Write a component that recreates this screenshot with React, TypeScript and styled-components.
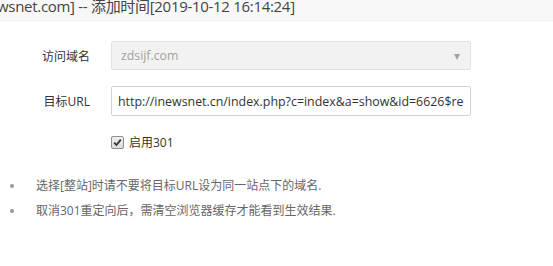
import React from "react"
import styled, { createGlobalStyle } from "styled-components"

const GlobalStyle = createGlobalStyle`
  html, body {
    margin: 0;
    padding: 0;
    background: #fff;
  }
  body {
    font-family: "Open Sans", "Noto Sans CJK SC", sans-serif;
    color: #333;
  }
`

const Page = styled.div`
  width: 553px;
  height: 266px;
  overflow: hidden;
  background: #fff;
`

const Header = styled.div`
  height: 20px;
  display: flex;
  align-items: flex-end;
  overflow: hidden;
  background: #f8f8f8;
  border-bottom: 1px solid #eee;
`

const Title = styled.div`
  font-size: 15px;
  line-height: 20px;
  letter-spacing: -0.3px;
  color: #444;
  white-space: nowrap;
  margin-left: -3px;
  margin-bottom: 4px;
`

const Form = styled.div`
  display: flex;
  flex-direction: column;
  gap: 16px;
  padding-top: 20px;
`

const Row = styled.div`
  display: flex;
  align-items: center;
`

const Label = styled.div`
  width: 90px;
  padding-right: 21px;
  text-align: right;
  font-size: 12px;
  color: #333;
  flex-shrink: 0;
`

const Select = styled.div`
  position: relative;
  box-sizing: border-box;
  width: 360px;
  height: 29px;
  padding: 0 9px;
  display: flex;
  align-items: center;
  background: #f2f2f2;
  border: 1px solid #e2e2e2;
  border-radius: 2px;
  font-size: 12.3px;
  color: #a3a39c;
`

const Arrow = styled.span`
  position: absolute;
  right: 10px;
  top: 12px;
  width: 0;
  height: 0;
  border-left: 3.5px solid transparent;
  border-right: 3.5px solid transparent;
  border-top: 6px solid #a5a59d;
`

const Input = styled.input`
  box-sizing: border-box;
  width: 360px;
  height: 30px;
  padding: 0 6px;
  border: 1px solid #d2d2d2;
  border-radius: 2px;
  font-family: "Open Sans", "Noto Sans CJK SC", sans-serif;
  font-size: 12.4px;
  color: #333;
  background: #fff;
  outline: none;
`

const CheckRow = styled.label`
  display: flex;
  align-items: center;
  gap: 5px;
  margin-left: 111px;
  margin-top: 1px;
  font-size: 12px;
  color: #333;
`

const Box = styled.span`
  box-sizing: border-box;
  width: 13px;
  height: 13px;
  border: 1px solid #8f8f8f;
  border-radius: 2px;
  background: linear-gradient(#f0f0f0, #dcdcdc);
  display: flex;
  align-items: center;
  justify-content: center;
`

const Tips = styled.ul`
  margin: 26px 0 0;
  padding: 0;
  list-style: none;
  display: flex;
  flex-direction: column;
  gap: 8px;
`

const Tip = styled.li`
  position: relative;
  padding-left: 36px;
  font-size: 12px;
  line-height: 17px;
  color: #666;

  &::before {
    content: "";
    position: absolute;
    left: 10px;
    top: 7px;
    width: 4px;
    height: 4px;
    border-radius: 50%;
    background: #999;
  }
`

export default function App() {
  return (
    <>
      <GlobalStyle />
      <Page>
        <Header>
          <Title>wsnet.com] -- 添加时间[2019-10-12 16:14:24]</Title>
        </Header>
        <Form>
          <Row>
            <Label>访问域名</Label>
            <Select>
              zdsijf.com
              <Arrow />
            </Select>
          </Row>
          <Row>
            <Label>目标URL</Label>
            <Input
              readOnly
              value="http://inewsnet.cn/index.php?c=index&a=show&id=6626$request_uri"
            />
          </Row>
          <CheckRow>
            <Box>
              <svg width="9" height="9" viewBox="0 0 9 9">
                <path d="M1.2 4.6 L3.5 7 L7.8 1.6" fill="none" stroke="#333" strokeWidth="1.8" />
              </svg>
            </Box>
            启用301
          </CheckRow>
        </Form>
        <Tips>
          <Tip>选择[整站]时请不要将目标URL设为同一站点下的域名.</Tip>
          <Tip>取消301重定向后，需清空浏览器缓存才能看到生效结果.</Tip>
        </Tips>
      </Page>
    </>
  )
}
